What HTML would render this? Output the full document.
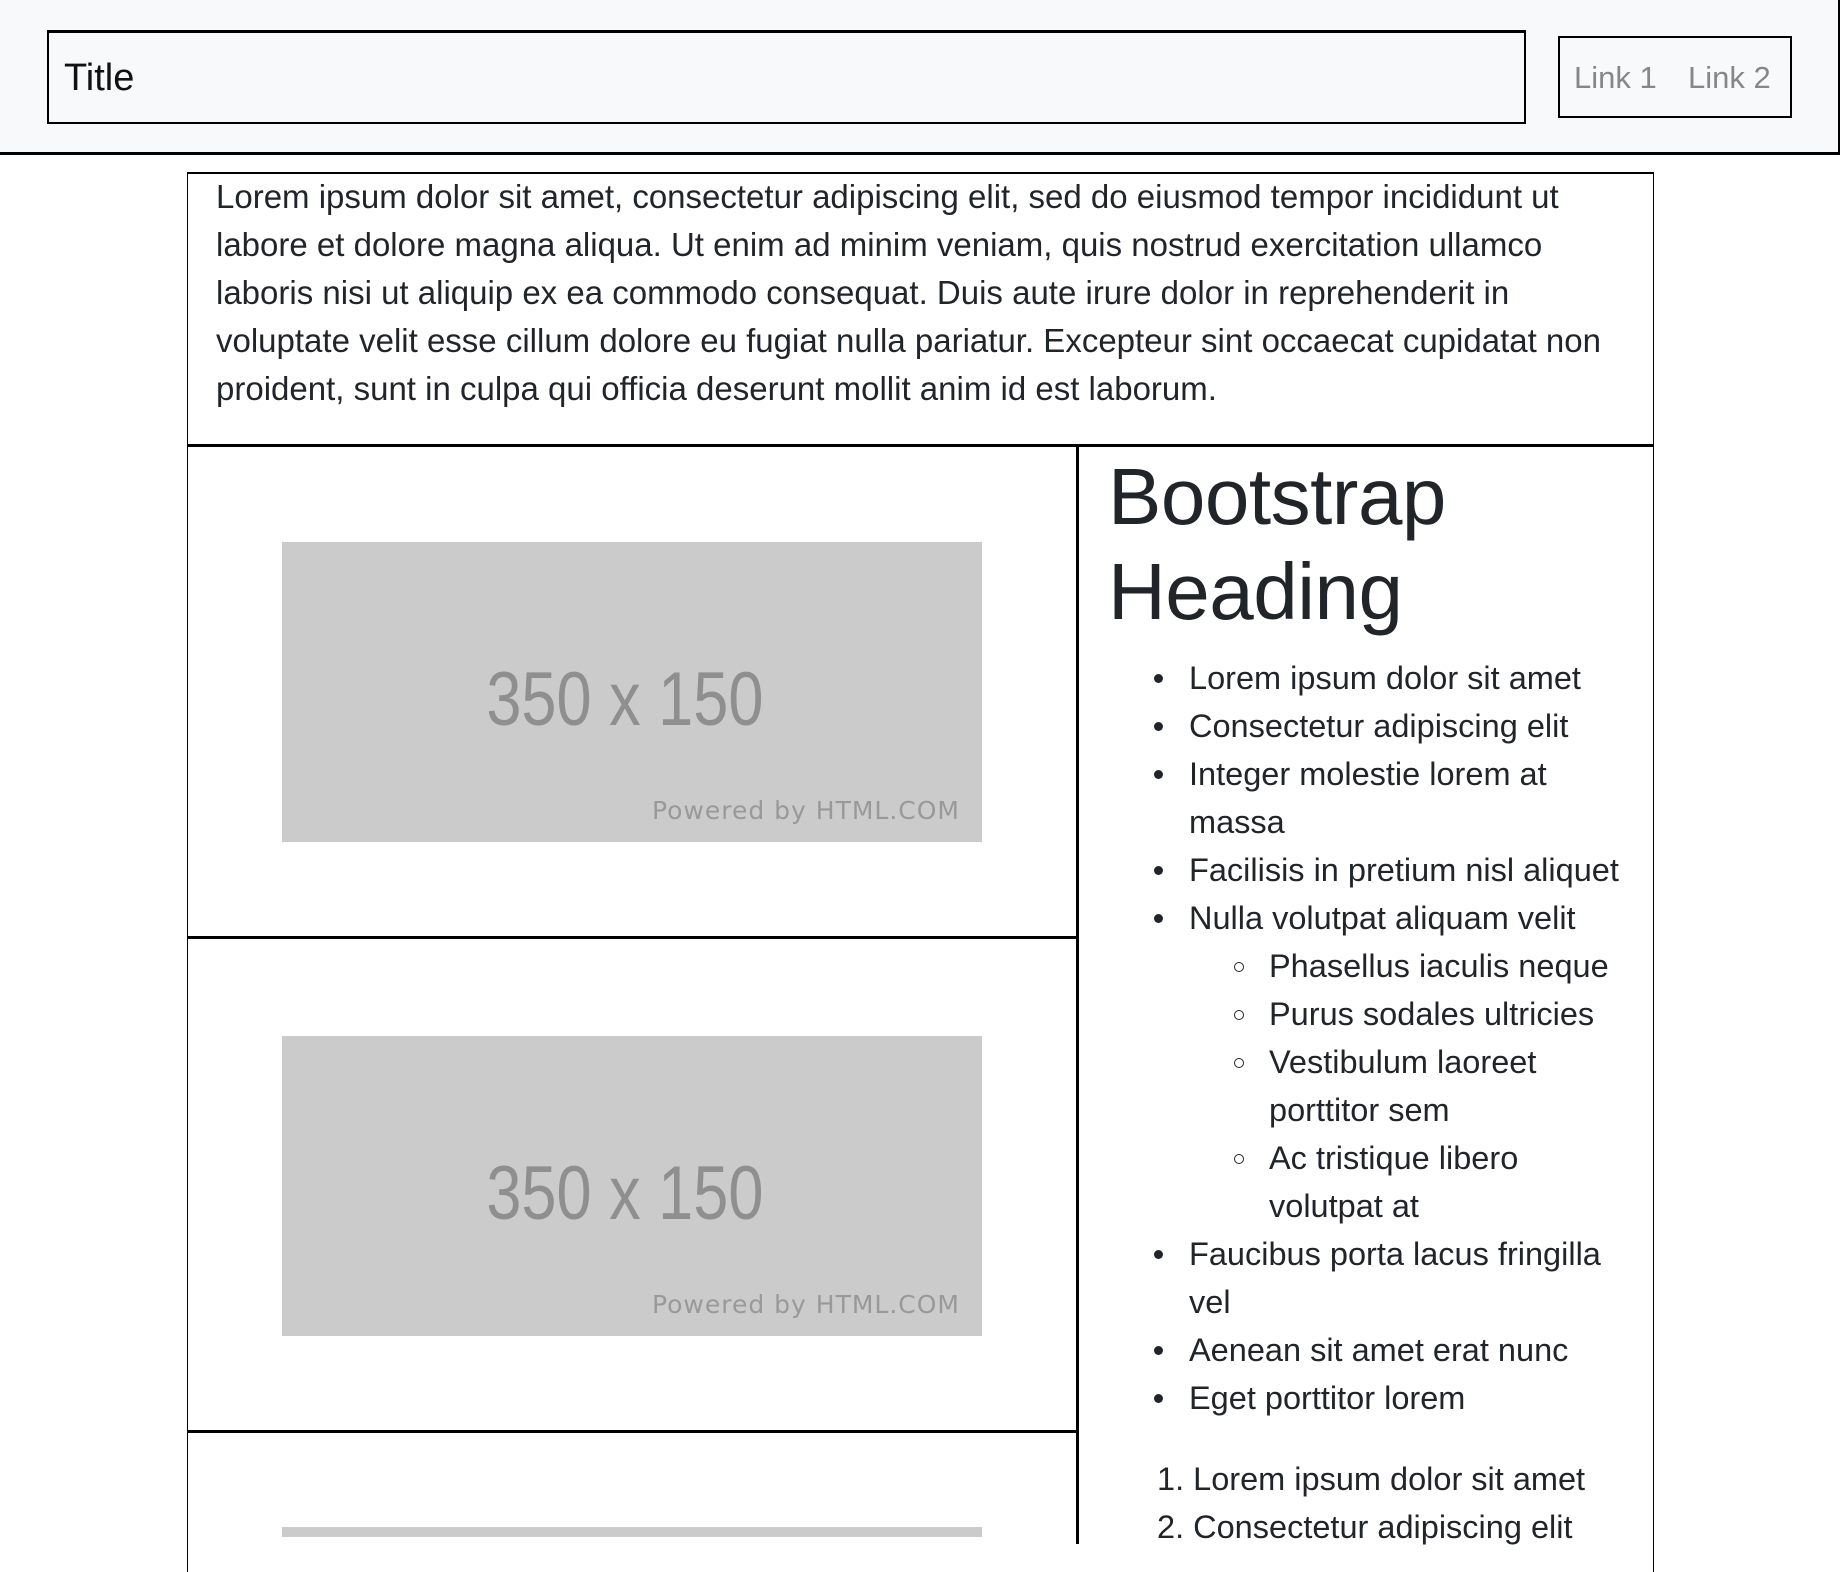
<!DOCTYPE html>
<html><head><meta charset="utf-8"><style>
*{margin:0;padding:0;box-sizing:border-box}
body{width:1840px;height:1530px;overflow:hidden;background:#fff;position:relative;font-family:"Liberation Sans",Arial,sans-serif;color:#212529}
.a{position:absolute;white-space:nowrap}
.l{position:absolute;white-space:nowrap;font-size:32.5px;line-height:48px;height:48px}
.p{font-size:33px}
.blk{position:absolute;background:#000}
.img{position:absolute;background:#cbcbcb;left:282px;width:700px;height:300px}
.img .big{position:absolute;left:0;right:0;top:118px;text-align:center;font-size:76px;color:#8f8f8f;transform:scaleX(.83);transform-origin:44% 50%;line-height:80px}
.img .pw{position:absolute;right:22px;top:254px;font-family:"DejaVu Sans",sans-serif;font-size:25px;color:#999;letter-spacing:1px}
.dot{position:absolute;width:9px;height:9px;border-radius:50%;background:#212529}
.ring{position:absolute;width:10px;height:10px;border-radius:50%;border:1.5px solid #212529}
</style></head><body>
<div class="a" style="left:0;top:0;width:1840px;height:155px;background:#f8f9fa;border-bottom:3px solid #000;border-right:2px solid #000"></div>
<div class="a" style="left:47px;top:30px;width:1479px;height:94px;border:2px solid #000;border-top-width:3px"></div>
<div class="a" style="left:64px;top:52px;font-size:38px;line-height:52px;color:#111">Title</div>
<div class="a" style="left:1558px;top:36px;width:234px;height:82px;border:2px solid #000"></div>
<div class="a" style="left:1574px;top:56px;font-size:31px;line-height:44px;color:#878787">Link 1</div>
<div class="a" style="left:1688px;top:56px;font-size:31px;line-height:44px;color:#878787">Link 2</div>

<div class="a" style="left:187px;top:172px;width:1467px;height:1400px;border-left:1.5px solid #000;border-right:1.5px solid #000;border-top:2px solid #000"></div>
<div class="blk" style="left:187px;top:444px;width:1467px;height:3px"></div>
<div class="blk" style="left:1076px;top:444px;width:3px;height:1100px"></div>
<div class="blk" style="left:187px;top:936px;width:890px;height:3px"></div>
<div class="blk" style="left:187px;top:1430px;width:890px;height:3px"></div>

<div class="l p" style="left:216px;top:173px">Lorem ipsum dolor sit amet, consectetur adipiscing elit, sed do eiusmod tempor incididunt ut</div>
<div class="l p" style="left:216px;top:221px">labore et dolore magna aliqua. Ut enim ad minim veniam, quis nostrud exercitation ullamco</div>
<div class="l p" style="left:216px;top:269px">laboris nisi ut aliquip ex ea commodo consequat. Duis aute irure dolor in reprehenderit in</div>
<div class="l p" style="left:216px;top:317px">voluptate velit esse cillum dolore eu fugiat nulla pariatur. Excepteur sint occaecat cupidatat non</div>
<div class="l p" style="left:216px;top:365px">proident, sunt in culpa qui officia deserunt mollit anim id est laborum.</div>

<div class="img" style="top:542px"><div class="big">350 x 150</div><div class="pw">Powered by HTML.COM</div></div>
<div class="img" style="top:1036px"><div class="big">350 x 150</div><div class="pw">Powered by HTML.COM</div></div>
<div class="img" style="top:1527px;height:10px"></div>

<div class="a" style="left:1108px;top:449px;font-size:80px;line-height:95px;font-weight:500;letter-spacing:-0.5px">Bootstrap</div>
<div class="a" style="left:1108px;top:544px;font-size:80px;line-height:95px;font-weight:500;letter-spacing:-0.5px">Heading</div>

<div class="dot" style="left:1154px;top:674px"></div><div class="l" style="left:1189px;top:654px">Lorem ipsum dolor sit amet</div>
<div class="dot" style="left:1154px;top:722px"></div><div class="l" style="left:1189px;top:702px">Consectetur adipiscing elit</div>
<div class="dot" style="left:1154px;top:770px"></div><div class="l" style="left:1189px;top:750px">Integer molestie lorem at</div>
<div class="l" style="left:1189px;top:798px">massa</div>
<div class="dot" style="left:1154px;top:866px"></div><div class="l" style="left:1189px;top:846px">Facilisis in pretium nisl aliquet</div>
<div class="dot" style="left:1154px;top:914px"></div><div class="l" style="left:1189px;top:894px">Nulla volutpat aliquam velit</div>
<div class="ring" style="left:1234px;top:962px"></div><div class="l" style="left:1269px;top:942px">Phasellus iaculis neque</div>
<div class="ring" style="left:1234px;top:1010px"></div><div class="l" style="left:1269px;top:990px">Purus sodales ultricies</div>
<div class="ring" style="left:1234px;top:1058px"></div><div class="l" style="left:1269px;top:1038px">Vestibulum laoreet</div>
<div class="l" style="left:1269px;top:1086px">porttitor sem</div>
<div class="ring" style="left:1234px;top:1154px"></div><div class="l" style="left:1269px;top:1134px">Ac tristique libero</div>
<div class="l" style="left:1269px;top:1182px">volutpat at</div>
<div class="dot" style="left:1154px;top:1250px"></div><div class="l" style="left:1189px;top:1230px">Faucibus porta lacus fringilla</div>
<div class="l" style="left:1189px;top:1278px">vel</div>
<div class="dot" style="left:1154px;top:1346px"></div><div class="l" style="left:1189px;top:1326px">Aenean sit amet erat nunc</div>
<div class="dot" style="left:1154px;top:1394px"></div><div class="l" style="left:1189px;top:1374px">Eget porttitor lorem</div>
<div class="l" style="left:1157px;top:1455px">1. Lorem ipsum dolor sit amet</div>
<div class="l" style="left:1157px;top:1503px">2. Consectetur adipiscing elit</div>
</body></html>
